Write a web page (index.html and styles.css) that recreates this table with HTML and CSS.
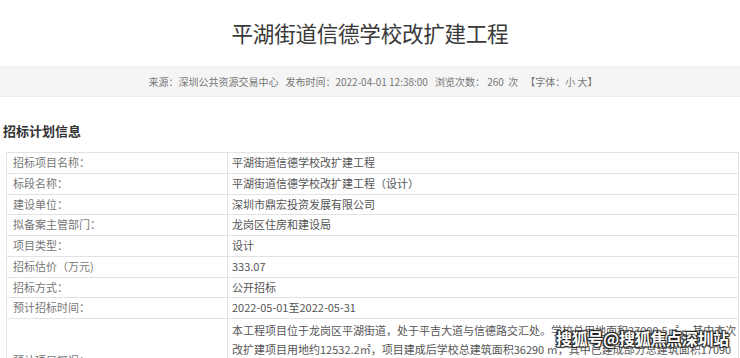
FILE: index.html
```html
<!DOCTYPE html>
<html lang="zh-CN">
<head>
<meta charset="utf-8">
<title>平湖街道信德学校改扩建工程</title>
<link rel="stylesheet" href="styles.css">
</head>
<body>
<div class="page">
  <h1 class="title">平湖街道信德学校改扩建工程</h1>
  <div class="meta">
    <span>来源：深圳公共资源交易中心</span>
    <span>发布时间：2022-04-01 12:38:00</span>
    <span>浏览次数： 260&nbsp; 次</span>
    <span>【字体：小 大】</span>
  </div>
  <h2 class="section">招标计划信息</h2>
  <div class="info">
    <div class="row"><div class="label">招标项目名称：</div><div class="value">平湖街道信德学校改扩建工程</div></div>
    <div class="row"><div class="label">标段名称：</div><div class="value">平湖街道信德学校改扩建工程（设计）</div></div>
    <div class="row"><div class="label">建设单位：</div><div class="value">深圳市鼎宏投资发展有限公司</div></div>
    <div class="row"><div class="label">拟备案主管部门：</div><div class="value">龙岗区住房和建设局</div></div>
    <div class="row"><div class="label">项目类型：</div><div class="value">设计</div></div>
    <div class="row"><div class="label">招标估价（万元)</div><div class="value">333.07</div></div>
    <div class="row"><div class="label">招标方式：</div><div class="value">公开招标</div></div>
    <div class="row"><div class="label">预计招标时间：</div><div class="value">2022-05-01至2022-05-31</div></div>
    <div class="row tall"><div class="label">预计项目概况：</div><div class="value">本工程项目位于龙岗区平湖街道，处于平吉大道与信德路交汇处。学校总用地面积27000.5㎡ ，其中本次<br>改扩建项目用地约12532.2㎡，项目建成后学校总建筑面积36290 ㎡，其中已建成部分总建筑面积17090<br>㎡，本次改扩建新增建筑面积约19200㎡。</div></div>
  </div>
  <div class="watermark">搜狐号@搜狐焦点深圳站</div>
</div>
</body>
</html>
```
FILE: styles.css
```css
html, body {
  margin: 0;
  padding: 0;
  background: #ffffff;
}
body {
  font-family: "Noto Sans CJK SC", "Noto Sans", sans-serif;
  color: #555;
}
.page {
  position: relative;
  width: 740px;
  height: 358px;
  overflow: hidden;
}
.title {
  margin: 0;
  padding-top: 18px;
  height: 48px;
  line-height: 30px;
  font-size: 21.6px;
  font-weight: 400;
  color: #3a3a3a;
  text-align: center;
  letter-spacing: -0.3px;
}
.meta {
  box-sizing: border-box;
  height: 31px;
  background: #f5f5f5;
  border-top: 1px solid #ececec;
  border-bottom: 1px solid #ececec;
  display: flex;
  justify-content: center;
  align-items: center;
  gap: 7px;
  font-size: 10px;
  color: #777;
  padding-left: 6px;
}
.section {
  margin: 25px 0 12px 3px;
  font-size: 13px;
  line-height: 18px;
  font-weight: 700;
  color: #333;
}
.info {
  margin-left: 6px;
  width: 731px;
  border-top: 1px solid #e2e2e2;
  border-left: 1px solid #e8e8e8;
  border-right: 1px solid #e2e2e2;
}
.row {
  box-sizing: border-box;
  display: grid;
  grid-template-columns: 221px 1fr;
  height: 20.75px;
  border-bottom: 1px solid #e2e2e2;
  font-size: 11px;
}
.label {
  padding-left: 6px;
  color: #777;
  line-height: 19.75px;
  border-right: 1px solid #e2e2e2;
  display: flex;
  align-items: center;
}
.value {
  padding-left: 4px;
  color: #555;
  line-height: 19.75px;
  white-space: nowrap;
}
.row.tall {
  height: 84px;
}
.row.tall .value {
  line-height: 18.5px;
  padding-top: 2px;
}
.watermark {
  position: absolute;
  left: 556px;
  top: 328px;
  font-size: 16px;
  line-height: 20px;
  font-weight: 700;
  color: #ffffff;
  letter-spacing: -0.3px;
  text-shadow: 0 0 2px #222, 1px 1px 1px #222, -1px -1px 1px #222, 1px -1px 1px #222, -1px 1px 1px #222;
}
```
